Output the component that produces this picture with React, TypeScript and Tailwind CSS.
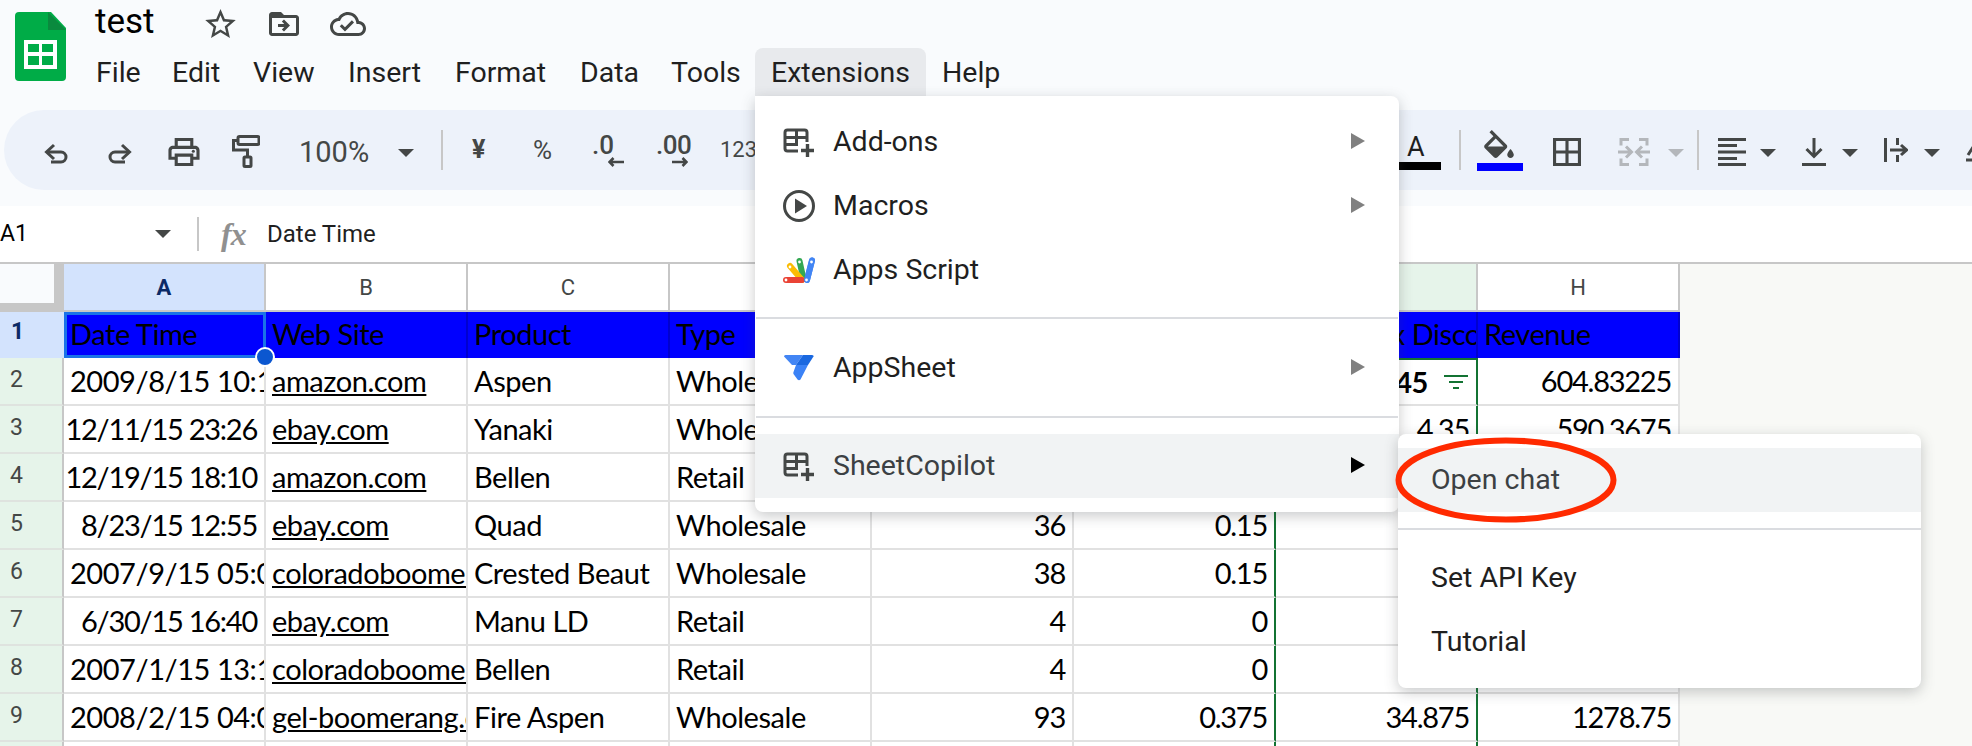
import type { ReactNode } from "react";

const iconColor = "#444746";

function Caret({ className = "ml-0", color = iconColor }: { className?: string; color?: string }) {
  return (
    <svg width="16" height="8" viewBox="0 0 16 8" className={`shrink-0 mt-[6px] ${className}`}>
      <polygon points="0,0 16,0 8,8" fill={color} />
    </svg>
  );
}

function Sep({ className }: { className: string }) {
  return <div className={`w-[2px] h-[40px] bg-[#c7c7c7] shrink-0 ${className}`} />;
}

function TablePlus({ className = "" }: { className?: string }) {
  return (
    <svg width="32" height="29" viewBox="0 0 32 29" fill="none" stroke="#444746" strokeWidth="3" className={className}>
      <path d="M15 23H4.5A2.5 2.5 0 0 1 2 20.5V4.5A2.5 2.5 0 0 1 4.5 2h17A2.5 2.5 0 0 1 24 4.5V14" />
      <path d="M2 9.5h22M2 16.5h13M13.5 2v14" />
      <path d="M18 22.5h13M24.5 16v13" strokeWidth="3.4" />
    </svg>
  );
}

function MenuRow({
  icon,
  label,
  arrow,
  active,
  textClass = "text-[#1f1f1f]",
  indent = "pl-[78px]",
}: {
  icon?: ReactNode;
  label: string;
  arrow?: boolean;
  active?: boolean;
  textClass?: string;
  indent?: string;
}) {
  return (
    <div className={`relative h-[64px] flex items-center ${indent} ${active ? "bg-[#f1f3f4]" : ""}`}>
      {icon && <div className="absolute left-[28px] top-0 bottom-0 w-[32px] flex items-center justify-center">{icon}</div>}
      <span className={`text-[28.5px] mt-[1px] ${textClass}`}>{label}</span>
      {arrow && (
        <svg width="14" height="16" viewBox="0 0 14 16" className="absolute right-[34px] top-[23px]">
          <polygon points="0,0 14,8 0,16" fill={active ? "#000000" : "#808080"} />
        </svg>
      )}
    </div>
  );
}

const columns = ["A", "B", "C", "D", "E", "F", "G", "H"];

type Cell = { t?: string; right?: boolean; link?: boolean; bold?: boolean };

const r = (t: string): Cell => ({ t, right: true });
const l = (t: string): Cell => ({ t });
const u = (t: string): Cell => ({ t, link: true });

const rows: Cell[][] = [
  [l("2009/8/15 10:13:00"), u("amazon.com"), l("Aspen"), l("Wholesale"), {}, {}, { t: "45", right: true, bold: true }, r("604.83225")],
  [r("12/11/15 23:26"), u("ebay.com"), l("Yanaki"), l("Wholesale"), {}, {}, r("4.35"), r("590.3675")],
  [r("12/19/15 18:10"), u("amazon.com"), l("Bellen"), l("Retail"), {}, {}, {}, {}],
  [r("8/23/15 12:55"), u("ebay.com"), l("Quad"), l("Wholesale"), r("36"), r("0.15"), {}, {}],
  [l("2007/9/15 05:02:00"), u("coloradoboomerangs.com"), l("Crested Beaut"), l("Wholesale"), r("38"), r("0.15"), {}, {}],
  [r("6/30/15 16:40"), u("ebay.com"), l("Manu LD"), l("Retail"), r("4"), r("0"), {}, {}],
  [l("2007/1/15 13:10:00"), u("coloradoboomerangs.com"), l("Bellen"), l("Retail"), r("4"), r("0"), {}, {}],
  [l("2008/2/15 04:00:00"), u("gel-boomerang.com"), l("Fire Aspen"), l("Wholesale"), r("93"), r("0.375"), r("34.875"), r("1278.75")],
  [{}, {}, {}, {}, {}, {}, {}, {}],
];

const headerCells = ["Date Time", "Web Site", "Product", "Type", "", "", "", "Revenue"];

function colBorder(col: number) {
  if (col === 5 || col === 6) return "border-r-[#137333]";
  return "border-r-[#e1e1e1]";
}

function GridRow({ cells, num, index }: { cells: Cell[]; num: number; index: number }) {
  return (
    <div className="flex h-[48px]">
      <div className="w-[64px] shrink-0 bg-[#e6f4ea] border-r-2 border-r-[#c7c7c7] border-b-2 border-b-[#dfe3df] pr-[31px] text-center text-[#444746] text-[23px] leading-[44px] pl-[2px]">
        {num}
      </div>
      {cells.map((c, i) => (
        <div
          key={i}
          className={`w-[202px] shrink-0 overflow-hidden whitespace-nowrap bg-white border-r-2 border-b-2 border-b-[#e1e1e1] pl-[6px] pr-[7px] flex items-center text-[29px] text-black font-[Lato,sans-serif] ${colBorder(i)} ${c.right ? "justify-end" : ""} ${c.bold ? "font-bold" : ""} ${c.right && !c.bold ? "tracking-[-1.25px]" : "tracking-[-0.45px]"} ${i === 6 && index === 0 ? "border-t-2 border-t-[#137333]" : ""}`}
        >
          <span className={c.link ? "underline" : ""}>{c.t}</span>
          {c.bold && (
            <svg width="24" height="14" viewBox="0 0 24 14" className="ml-[16px] mr-[1px] shrink-0" fill="#137333">
              <rect x="0" y="0" width="24" height="2" />
              <rect x="5" y="6" width="14" height="2" />
              <rect x="9" y="12" width="6" height="2" />
            </svg>
          )}
        </div>
      ))}
      <div className="flex-1 bg-[#f8f9f6]" />
    </div>
  );
}

export default function App() {
  const menu = [
    { label: "File", w: "w-[76px]" },
    { label: "Edit", w: "w-[81px]" },
    { label: "View", w: "w-[95px]" },
    { label: "Insert", w: "w-[107px]" },
    { label: "Format", w: "w-[125px]" },
    { label: "Data", w: "w-[91px]" },
    { label: "Tools", w: "w-[83px]" },
  ];

  return (
    <div className="relative w-[1972px] h-[746px] overflow-hidden bg-[#f9fbfd] font-[Roboto,sans-serif]">
      {/* title bar */}
      <div className="h-[110px] flex">
        <svg width="51" height="69" viewBox="0 0 51 69" className="ml-[15px] mt-[12px] shrink-0">
          <path d="M4 0h32l15 16v49a4 4 0 0 1-4 4H4a4 4 0 0 1-4-4V4a4 4 0 0 1 4-4z" fill="#00ac47" />
          <path d="M33 0l18 18H33z" fill="#0a8a3e" />
          <path d="M9 28h33v29H9z" fill="#ffffff" />
          <path d="M13 32h11v8H13zM27 32h11v8H27zM13 44h11v9H13zM27 44h11v9H27z" fill="#00ac47" />
        </svg>
        <div className="ml-[31px] flex flex-col">
          <div className="flex items-start h-[48px]">
            <span className="w-[60px] text-[35px] leading-[40px] text-black -ml-[2px] mt-[2px]">test</span>
            <svg width="31" height="29" viewBox="2 2 20 19" className="ml-[50px] mt-[9px]" fill={iconColor}>
              <path d="M22 9.24l-7.19-.62L12 2 9.19 8.63 2 9.24l5.46 4.73L5.82 21 12 17.27 18.18 21l-1.63-7.03L22 9.24zM12 15.4l-3.76 2.27 1-4.28-3.32-2.88 4.38-.38L12 6.1l1.71 4.04 4.38.38-3.32 2.88 1 4.28L12 15.4z" />
            </svg>
            <svg width="32" height="24" viewBox="2 4 20 16" className="ml-[32px] mt-[12px]" fill={iconColor}>
              <path d="M20 6h-8l-2-2H4c-1.1 0-1.99.9-1.99 2L2 18c0 1.1.9 2 2 2h16c1.1 0 2-.9 2-2V8c0-1.1-.9-2-2-2zm0 12H4V8h16v10zm-8.01-9l-1.41 1.41L12.16 12H8v2h4.16l-1.59 1.59L11.99 17 16 13.01 11.99 9z" />
            </svg>
            <svg width="36" height="24" viewBox="0 4 24 16" className="ml-[30px] mt-[12px]" fill={iconColor}>
              <path d="M19.35 10.04C18.67 6.59 15.64 4 12 4 9.11 4 6.6 5.64 5.35 8.04 2.34 8.36 0 10.91 0 14c0 3.31 2.69 6 6 6h13c2.76 0 5-2.24 5-5 0-2.64-2.05-4.78-4.65-4.96zM19 18H6c-2.21 0-4-1.79-4-4 0-2.05 1.53-3.76 3.56-3.97l1.07-.11.5-.95C8.08 7.14 9.94 6 12 6c2.62 0 4.88 1.86 5.39 4.43l.3 1.5 1.53.11c1.56.1 2.78 1.41 2.78 2.96 0 1.65-1.35 3-3 3zm-9-3.82l-2.09-2.09L6.5 13.5 10 17l6.01-6.01-1.41-1.41z" />
            </svg>
          </div>
          <div className="flex h-[48px] text-[28.5px] leading-[50px] text-[#1f1f1f]">
            {menu.map((m) => (
              <span key={m.label} className={`-ml-[1px] mr-[1px] ${m.w}`}>
                {m.label}
              </span>
            ))}
            <span className="w-[171px] pl-[16px] bg-[#e8eaed] rounded-t-[8px]">Extensions</span>
            <span className="ml-[16px]">Help</span>
          </div>
        </div>
      </div>

      {/* toolbar */}
      <div className="ml-[4px] h-[80px] bg-[#edf2fa] rounded-l-[40px] flex items-center text-[#444746] whitespace-nowrap">
        <svg width="24" height="21" viewBox="0 0 24 21" fill="none" stroke={iconColor} strokeWidth="3" className="ml-[40px] mt-[6px] shrink-0">
          <path d="M10 2 2.5 9l7.5 7" />
          <path d="M3 9h14a5 5 0 0 1 0 10H7" />
        </svg>
        <svg width="24" height="21" viewBox="0 0 24 21" fill="none" stroke={iconColor} strokeWidth="3" className="ml-[40px] mt-[6px] shrink-0">
          <path d="M14 2l7.5 7-7.5 7" />
          <path d="M21 9H7a5 5 0 0 0 0 10h10" />
        </svg>
        <svg width="32" height="28" viewBox="2 3 20 18" className="ml-[36px] mt-[4px] shrink-0" fill={iconColor}>
          <path d="M19 8h-1V3H6v5H5c-1.66 0-3 1.34-3 3v6h4v4h12v-4h4v-6c0-1.66-1.34-3-3-3zM8 5h8v3H8V5zm8 12v2H8v-4h8v2zm2-2v-2H6v2H4v-4c0-.55.45-1 1-1h14c.55 0 1 .45 1 1v4h-2z" />
          <circle cx="18" cy="11.5" r="1" />
        </svg>
        <svg width="28" height="33" viewBox="0 0 28 33" fill="none" stroke={iconColor} strokeWidth="3" className="ml-[32px] mt-[3px] shrink-0">
          <rect x="6" y="1.5" width="21" height="8" rx="1.5" />
          <path d="M6 5.5H1.5v9.5h14v6" />
          <rect x="12" y="22" width="7" height="9.5" rx="1" />
        </svg>
        <span className="ml-[39px] w-[69px] text-[29px] mt-[6px] shrink-0">100%</span>
        <Caret className="ml-[30px]" />
        <Sep className="ml-[27px]" />
        <span className="ml-[29px] w-[14px] text-[25px] font-bold shrink-0 -mt-[1px] leading-none">¥</span>
        <span className="ml-[47px] w-[22px] text-[26px] shrink-0 -mt-[1px] leading-none">%</span>
        <div className="relative ml-[37px] w-[32px] h-[32px] shrink-0 mt-[2px] font-medium">
          <span className="absolute left-0 -top-[2px] text-[26px] leading-[24px]">.0</span>
          <svg width="16" height="10" viewBox="0 0 16 10" className="absolute left-[16px] top-[22px]" fill="none" stroke={iconColor} strokeWidth="2.6">
            <path d="M5.5 1 1.5 5l4 4M2 5h14" />
          </svg>
        </div>
        <div className="relative ml-[32px] w-[33px] h-[32px] shrink-0 mt-[2px] font-medium">
          <span className="absolute left-0 -top-[2px] text-[26px] leading-[24px] tracking-[-0.5px]">.00</span>
          <svg width="16" height="10" viewBox="0 0 16 10" className="absolute left-[16px] top-[22px]" fill="none" stroke={iconColor} strokeWidth="2.6">
            <path d="M10.5 1l4 4-4 4M14 5H0" />
          </svg>
        </div>
        <span className="ml-[31px] w-[35px] text-[22px] shrink-0 leading-none">123</span>
        <div className="ml-[644px] w-[42px] h-[40px] shrink-0 relative">
          <span className="absolute left-[8px] top-[5px] text-[27px] leading-[24px] text-[#1f1f1f]">A</span>
          <div className="absolute left-0 right-0 bottom-0 h-[8px] bg-black" />
        </div>
        <Sep className="ml-[18px]" />
        <div className="ml-[16px] w-[46px] h-[41px] shrink-0 relative">
          <svg width="30" height="28" viewBox="3 0 18 17" className="absolute left-[7px] top-0" fill={iconColor}>
            <path d="M16.56 8.94L7.62 0 6.21 1.41l2.38 2.38-5.15 5.15c-.59.59-.59 1.54 0 2.12l5.5 5.5c.29.29.68.44 1.06.44s.77-.15 1.06-.44l5.5-5.5c.59-.58.59-1.53 0-2.12zM5.21 10L10 5.21 14.79 10H5.21zM19 11.5s-2 2.17-2 3.5c0 1.1.9 2 2 2s2-.9 2-2c0-1.33-2-3.5-2-3.5z" />
          </svg>
          <div className="absolute left-0 right-0 bottom-0 h-[8px] bg-[#0000ff]" />
        </div>
        <svg width="28" height="28" viewBox="3 3 18 18" className="ml-[30px] mt-[4px] shrink-0" fill={iconColor}>
          <path d="M3 3v18h18V3H3zm8 16H5v-6h6v6zm0-8H5V5h6v6zm8 8h-6v-6h6v6zm0-8h-6V5h6v6z" />
        </svg>
        <svg width="32" height="28" viewBox="0 0 32 28" fill="none" stroke="#b4b7bb" strokeWidth="3" className="ml-[37px] mt-[4px] shrink-0">
          <path d="M11 1.5H3v6M21 1.5h8v6M3 20.5v6h8M29 20.5v6h-8" />
          <path d="M0 14h13M8 8.5l5.5 5.5L8 19.5M32 14H19M24 8.5L18.5 14l5.5 5.5" />
        </svg>
        <Caret className="ml-[18px]" color="#b4b7bb" />
        <Sep className="ml-[13px]" />
        <svg width="28" height="28" viewBox="0 0 28 28" className="ml-[19px] mt-[4px] shrink-0" fill={iconColor}>
          <rect x="0" y="0" width="28" height="3" />
          <rect x="0" y="6" width="19" height="3" />
          <rect x="0" y="12.5" width="28" height="3" />
          <rect x="0" y="19" width="19" height="3" />
          <rect x="0" y="25" width="28" height="3" />
        </svg>
        <Caret className="ml-[14px]" />
        <svg width="24" height="28" viewBox="0 0 24 28" fill="none" stroke={iconColor} strokeWidth="3" className="ml-[26px] mt-[4px] shrink-0">
          <path d="M12 0v18M4.5 11l7.5 7.5 7.5-7.5M0 26.5h24" />
        </svg>
        <Caret className="ml-[16px]" />
        <svg width="24" height="28" viewBox="0 0 24 28" fill="none" stroke={iconColor} strokeWidth="3" className="ml-[26px] mt-[4px] shrink-0">
          <path d="M1.5 0v24M13.5 0v7M13.5 17v7M6 12h16M17 7l5.5 5-5.5 5" />
        </svg>
        <Caret className="ml-[16px]" />
        <svg width="24" height="24" viewBox="0 0 24 24" fill="none" stroke={iconColor} strokeWidth="3" className="ml-[26px] mt-[2px] shrink-0">
          <path d="M0 21h24M2 16 11 2" />
        </svg>
      </div>

      <div className="h-[16px]" />

      {/* formula bar */}
      <div className="h-[56px] bg-white flex items-center text-[#1f1f1f] whitespace-nowrap">
        <span className="w-[155px] text-[23px] text-black">A1</span>
        <Caret className="!mt-0" />
        <div className="ml-[26px] w-[2px] h-[34px] bg-[#c7c7c7]" />
        <span className="ml-[22px] w-[28px] text-[32px] font-[Liberation_Serif,serif] italic font-bold text-[#909090] leading-none tracking-[-1px]">fx</span>
        <span className="ml-[18px] text-[24px]">Date Time</span>
      </div>

      {/* sheet */}
      <div className="border-t-2 border-[#c7c7c7]">
        <div className="flex h-[48px]">
          <div className="w-[64px] shrink-0 bg-[#c7c7c7] pr-[10px] pb-[9px]">
            <div className="h-full bg-[#f9fbfd]" />
          </div>
          {columns.map((c, i) => (
            <div
              key={c}
              className={`w-[202px] shrink-0 border-r-2 border-r-[#c7c7c7] border-b-2 border-b-[#c7c7c7] flex items-center justify-center text-[22px] ${
                i === 0 ? "bg-[#d3e3fd] text-[#0b2a66] font-bold" : i === 6 ? "bg-[#e6f4ea]" : "bg-white text-[#444746]"
              }`}
            >
              {c}
            </div>
          ))}
          <div className="flex-1 bg-[#f8f9f6]" />
        </div>

        <div className="flex h-[46px]">
          <div className="w-[64px] shrink-0 bg-[#d3e3fd] pr-[31px] pl-[2px] text-center text-[#0b2a66] font-bold text-[23px] leading-[40px]">1</div>
          {headerCells.map((h, i) => (
            <div
              key={i}
              className={`relative w-[202px] shrink-0 whitespace-nowrap flex items-center text-[29px] leading-[38px] pb-[2px] text-black bg-[#0000ff] font-[Lato,sans-serif] tracking-[-0.45px] ${
                i === 0 ? "border-[3px] border-[#1a73e8] pl-[3px]" : "border-r-2 border-r-[#0000d0] pl-[6px]"
              }`}
            >
              {h}
              {i === 0 && (
                <div className="absolute -right-[12px] -bottom-[12px] z-10 w-[20px] h-[20px] rounded-full bg-[#0b57d0] border-2 border-white" />
              )}
            </div>
          ))}
          <div className="flex-1 bg-[#f8f9f6]" />
        </div>

        {rows.map((row, i) => (
          <GridRow key={i} cells={row} num={i + 2} index={i} />
        ))}
      </div>

      {/* clipped header text that runs under the menu */}
      <div className="absolute left-[1276px] top-[312px] w-[200px] h-[46px] pb-[2px] overflow-hidden flex items-center justify-end whitespace-nowrap text-[29px] text-black font-[Lato,sans-serif] tracking-[-0.45px]">
        <span className="shrink-0 -mr-[46px]">Tax Discount</span>
      </div>

      {/* Extensions menu */}
      <div className="absolute left-[755px] top-[96px] w-[644px] h-[416px] bg-white rounded-b-[8px] rounded-tr-[8px] py-[14px] shadow-[0_4px_14px_rgba(60,64,67,0.28)] z-20">
        <MenuRow label="Add-ons" arrow icon={<TablePlus />} />
        <MenuRow
          label="Macros"
          arrow
          icon={
            <svg width="32" height="32" viewBox="0 0 32 32">
              <circle cx="16" cy="16" r="14.5" fill="none" stroke="#444746" strokeWidth="3" />
              <polygon points="12,8.5 24,16 12,23.5" fill="#444746" />
            </svg>
          }
        />
        <MenuRow
          label="Apps Script"
          icon={
            <svg width="32" height="26" viewBox="0 0 32 26" fill="none" strokeLinecap="round">
              <path d="M24 23 29 3.5" stroke="#4285f4" strokeWidth="6" />
              <path d="M20.5 22 16.5 4" stroke="#34a853" strokeWidth="6" />
              <path d="M19 23 7 9" stroke="#fbbc04" strokeWidth="6" />
              <path d="M19 23H3" stroke="#ea4335" strokeWidth="6" />
              <path d="M24 23 29 3.5" stroke="#4285f4" strokeWidth="6" />
              <circle cx="28.5" cy="5" r="1.4" fill="#fff" />
              <circle cx="16.5" cy="5" r="1.4" fill="#fff" />
              <circle cx="7" cy="10" r="1.4" fill="#fff" />
              <circle cx="3" cy="23" r="1.4" fill="#fff" />
              <circle cx="23.5" cy="23" r="1.4" fill="#fff" />
            </svg>
          }
        />
        <div className="h-[2px] mt-[15px] mb-[17px] mx-[1px] bg-[#dadce0]" />
        <MenuRow
          label="AppSheet"
          arrow
          icon={
            <svg width="30" height="26" viewBox="0 0 30 26" className="-mt-[1px]">
              <path d="M0 1.5Q0 0 1.5 0H19L12 10H8z" fill="#4285f4" />
              <path d="M19 0H28Q30 0 29.5 1.5L24 10H12z" fill="#1a68e0" />
              <path d="M12 10H24L16.5 24.5Q15 26 13.5 24.5L9.5 19Q9 18 9.5 17z" fill="#3b82f6" />
            </svg>
          }
        />
        <div className="h-[2px] mt-[16px] mb-[16px] mx-[1px] bg-[#dadce0]" />
        <MenuRow label="SheetCopilot" arrow active textClass="text-[#3c4043]" icon={<TablePlus />} />
      </div>

      {/* SheetCopilot submenu */}
      <div className="absolute left-[1398px] top-[434px] w-[523px] h-[254px] bg-white rounded-[8px] py-[14px] shadow-[0_4px_14px_rgba(60,64,67,0.28)] z-20">
        <MenuRow label="Open chat" active indent="pl-[33px]" textClass="text-[#3c4043]" />
        <div className="h-[2px] my-[16px] bg-[#dadce0]" />
        <MenuRow label="Set API Key" indent="pl-[33px]" />
        <MenuRow label="Tutorial" indent="pl-[33px]" />
      </div>

      {/* red annotation */}
      <svg width="224" height="88" viewBox="0 0 224 88" className="absolute left-[1394px] top-[436px] z-30" fill="none">
        <ellipse cx="112" cy="44" rx="107.5" ry="39.5" stroke="#ff2a00" strokeWidth="6" />
      </svg>
    </div>
  );
}
